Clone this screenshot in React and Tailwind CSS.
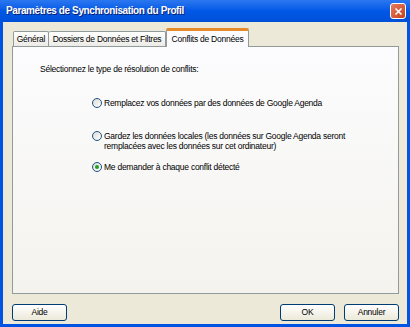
import React from 'react'

const font = { fontFamily: 'Tahoma, "Liberation Sans", Arial, sans-serif' }

function Radio({ checked }) {
  return (
    <span className="w-[10px] h-[10px] shrink-0 rounded-full border border-[#1c5180] bg-gradient-to-br from-[#dcdbd5] to-white flex items-center justify-center">
      {checked && <span className="w-[4px] h-[4px] rounded-full bg-[#21a121]" />}
    </span>
  )
}

function Option({ checked, children }) {
  return (
    <div className="flex gap-[2px] items-start">
      <Radio checked={checked} />
      <div className="leading-[10px]">{children}</div>
    </div>
  )
}

function Button({ children }) {
  return (
    <button className="w-[55px] h-[17px] rounded-[3px] border border-[#003c74] bg-gradient-to-b from-white to-[#ece9d8] text-[8.5px] leading-none text-black flex items-center justify-center">
      {children}
    </button>
  )
}

export default function App() {
  return (
    <div className="w-[410px] h-[327px] bg-[#0054e3] flex flex-col text-[8.5px] leading-[10px] tracking-[-0.25px] text-black" style={font}>
      {/* title bar */}
      <div className="h-[22px] shrink-0 bg-gradient-to-b from-[#2a77f0] via-[#0058e6] to-[#0050d8] flex items-center justify-between pl-[6px] pr-[4px]">
        <span className="text-white font-bold text-[10px] tracking-[-0.4px] [text-shadow:1px_1px_#0a1e6e]">Paramètres de Synchronisation du Profil</span>
        <span className="w-[16px] h-[16px] rounded-[3px] border border-white bg-gradient-to-br from-[#e57b5b] to-[#c7401a] flex items-center justify-center">
          <svg width="9" height="9" viewBox="0 0 9 9">
            <path d="M1.5 1.5 L7.5 7.5 M7.5 1.5 L1.5 7.5" stroke="white" strokeWidth="1.6" />
          </svg>
        </span>
      </div>
      {/* body */}
      <div className="flex-1 mx-[3px] mb-[3px] bg-[#ece9d8] flex flex-col pl-[9px] pr-[8px] pt-[6px]">
        {/* tabs */}
        <div className="flex items-end pl-[1px] h-[18px] whitespace-nowrap">
          <div className="h-[15px] w-[36px] border border-b-0 border-[#919b9c] bg-gradient-to-b from-white to-[#ecebe6] rounded-t-[2px] flex items-center justify-center">Général</div>
          <div className="h-[15px] w-[117px] border border-b-0 border-l-0 border-[#919b9c] bg-gradient-to-b from-white to-[#ecebe6] rounded-t-[2px] flex items-center justify-center">Dossiers de Données et Filtres</div>
          <div className="h-[19px] w-[83px] -mb-[1px] relative z-10 border-x border-[#919b9c] border-t-[3px] border-t-[#e68b2c] bg-[#fcfcfe] rounded-t-[2px] flex items-center justify-center">Conflits de Données</div>
        </div>
        <div className="h-[248px] border border-[#919b9c] bg-gradient-to-b from-[#fcfcfe] to-[#f4f3ee] pt-[17px] pl-[27px]">
          <div>Sélectionnez le type de résolution de conflits:</div>
          <div className="ml-[52px] mt-[24px] flex flex-col">
            <Option>Remplacez vos données par des données de Google Agenda</Option>
            <div className="mt-[23px]">
              <Option>Gardez les données locales (les données sur Google Agenda seront<br />remplacées avec les données sur cet ordinateur)</Option>
            </div>
            <div className="mt-[11px]">
              <Option checked>Me demander à chaque conflit détecté</Option>
            </div>
          </div>
        </div>
        <div className="flex items-center mt-[10px]">
          <Button>Aide</Button>
          <div className="flex-1" />
          <Button>OK</Button>
          <div className="w-[9px]" />
          <Button>Annuler</Button>
        </div>
      </div>
    </div>
  )
}
